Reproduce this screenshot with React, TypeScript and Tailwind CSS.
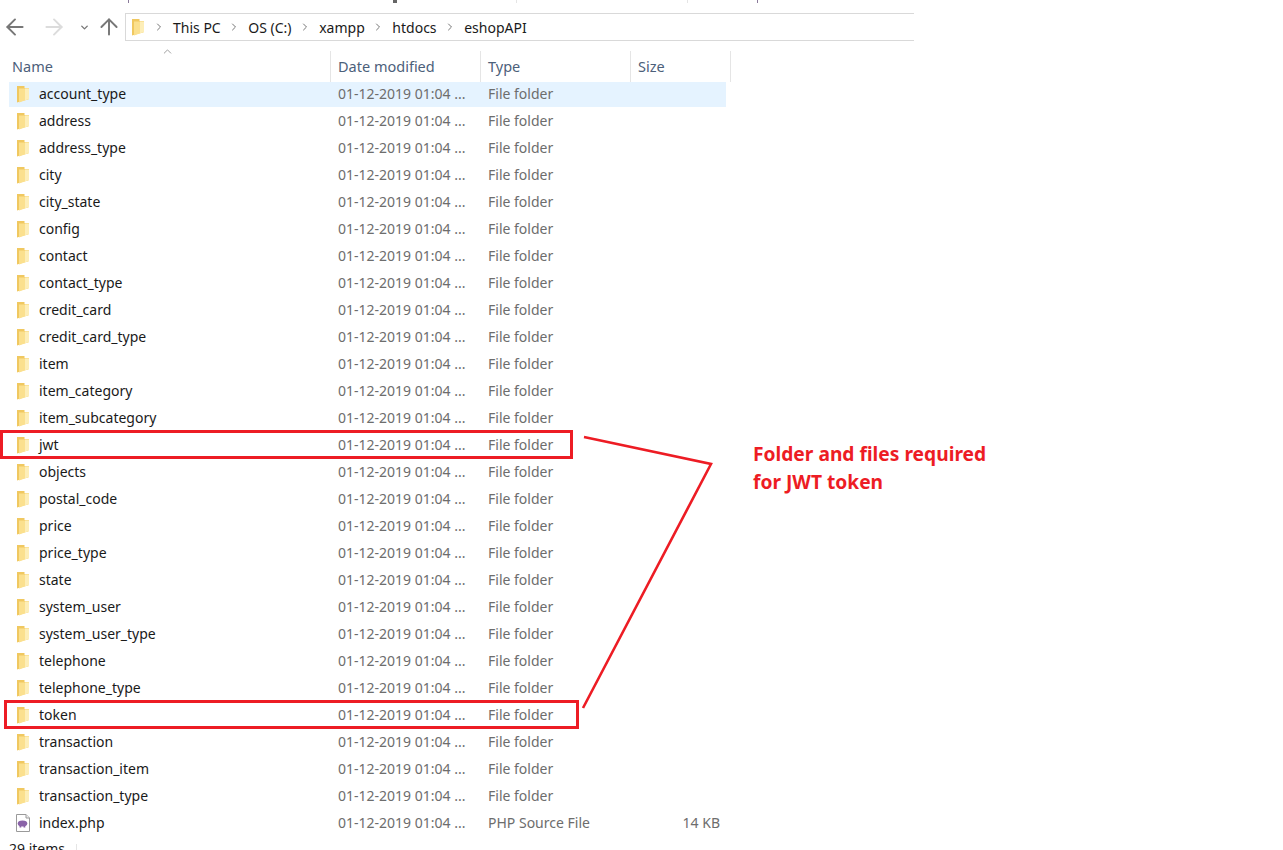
import { ArrowLeft, ArrowRight, ArrowUp, ChevronDown, ChevronRight, ChevronUp } from 'lucide-react';

const folders = [
  'account_type', 'address', 'address_type', 'city', 'city_state', 'config', 'contact', 'contact_type',
  'credit_card', 'credit_card_type', 'item', 'item_category', 'item_subcategory', 'jwt', 'objects',
  'postal_code', 'price', 'price_type', 'state', 'system_user', 'system_user_type', 'telephone',
  'telephone_type', 'token', 'transaction', 'transaction_item', 'transaction_type',
];

const crumbs = ['This PC', 'OS (C:)', 'xampp', 'htdocs', 'eshopAPI'];

function FolderIcon({ className = '' }: { className?: string }) {
  return (
    <svg width="14" height="18" viewBox="0 0 14 18" className={className}>
      <path d="M1 1 L8.5 1 L8.5 3 L13 3 L13 14 L1 17.5 Z" fill="#f0c860" />
      <path d="M3 3.5 L13 3.5 L13 14 L3 17.5 Z" fill="#fbe08e" />
      <path d="M9 3.5 L13 3.5 L13 14 L9 15.2 Z" fill="#fdeeb8" />
    </svg>
  );
}

function PhpIcon() {
  return (
    <svg width="14" height="18" viewBox="0 0 14 18">
      <path d="M0.5 0.5 H10 L13.5 4 V17.5 H0.5 Z" fill="#fff" stroke="#9a9a9a" />
      <path d="M10 0.5 V4 H13.5" fill="#eee" stroke="#9a9a9a" />
      <ellipse cx="6.5" cy="9.5" rx="4.8" ry="3" fill="#8a63a8" />
      <rect x="3.5" y="11" width="1.8" height="2.5" fill="#8a63a8" />
      <rect x="7.5" y="11" width="1.8" height="2.5" fill="#8a63a8" />
    </svg>
  );
}

function Row({ name, selected, icon, type = 'File folder', size = '' }: { name: string; selected?: boolean; icon?: React.ReactNode; type?: string; size?: string }) {
  return (
    <div className={`ml-[9px] w-[717px] h-[25px] mb-[2px] pb-[2px] flex items-center text-[14px] ${selected ? 'bg-[#e5f3ff]' : ''}`}>
      <div className="w-[321px] flex items-center">
        <div className="w-[30px] pl-[7px] pt-[1px] flex items-center">{icon ?? <FolderIcon />}</div>
        <span className="text-[#1a1a1a]">{name}</span>
      </div>
      <div className="w-[150px] pl-[8px] text-[#6d6d6d] whitespace-nowrap">01-12-2019 01:04 ...</div>
      <div className="w-[150px] pl-[8px] text-[#6d6d6d] whitespace-nowrap">{type}</div>
      <div className="w-[90px] text-right text-[#6d6d6d]">{size}</div>
    </div>
  );
}

export default function App() {
  return (
    <div className="relative w-[1283px] h-[850px] overflow-hidden bg-white font-['Noto_Sans','Open_Sans',sans-serif]">
      {/* Descenders left from the cropped row above */}
      <div className="absolute left-[128px] top-0 w-px h-[3px] bg-[#8a7a9a]" />
      <div className="absolute left-[393px] top-0 w-[4px] h-[3px] bg-[#666666]" />
      <div className="absolute left-[516px] top-0 w-px h-[3px] bg-[#e5e5e5]" />
      <div className="absolute left-[687px] top-0 w-px h-[3px] bg-[#e5e5e5]" />
      <div className="absolute left-[757px] top-0 w-px h-[3px] bg-[#8a7a9a]" />

      {/* Address bar */}
      <div className="h-[50px] pt-[13px] flex">
        <div className="w-[125px] h-[28px] flex items-center text-[#777777]">
          <ArrowLeft className="ml-[2px] w-[26px] h-[26px]" strokeWidth={1.8} />
          <ArrowRight className="ml-[13px] w-[26px] h-[26px] text-[#dcdcdc]" strokeWidth={1.8} />
          <ChevronDown className="ml-[12px] w-[11px] h-[11px]" strokeWidth={3} />
          <ArrowUp className="ml-[6px] w-[26px] h-[26px]" strokeWidth={1.8} />
        </div>
        <div className="w-[789px] h-[28px] border-t border-b border-l border-[#d9d9d9] flex items-center text-[14px] text-[#1a1a1a]">
          <FolderIcon className="ml-[5px] mr-[8px]" />
          {crumbs.map((crumb) => (
            <div key={crumb} className="flex items-center">
              <ChevronRight className="w-[12px] h-[12px] text-[#777777] mr-[8px]" strokeWidth={2} />
              <span className="mr-[7.6px]">{crumb}</span>
            </div>
          ))}
        </div>
      </div>

      {/* Column headers */}
      <div className="relative h-[32px] pt-[1px] flex items-center text-[14.5px] text-[#4c607a]">
        <ChevronUp className="absolute left-[161px] top-[-5px] w-[13px] h-[13px] text-[#8a8a8a]" strokeWidth={1.5} />
        <div className="w-[331px] h-full pl-[12px] flex items-center border-r border-[#e5e5e5]">Name</div>
        <div className="w-[150px] h-full pl-[7px] flex items-center border-r border-[#e5e5e5]">Date modified</div>
        <div className="w-[150px] h-full pl-[7px] flex items-center border-r border-[#e5e5e5]">Type</div>
        <div className="w-[100px] h-full pl-[7px] flex items-center border-r border-[#e5e5e5]">Size</div>
      </div>

      {/* File list */}
      <div>
        {folders.map((name, i) => (
          <Row key={name} name={name} selected={i === 0} />
        ))}
        <Row name="index.php" icon={<PhpIcon />} type="PHP Source File" size="14 KB" />
      </div>

      {/* Status bar, cut by the bottom of the window */}
      <div className="flex h-[12px]">
        <div className="w-[67px] ml-[9px] pt-[1px] text-[14px] leading-[20px] text-[#1a1a1a] whitespace-nowrap">29 items</div>
        <div className="mt-[6px] w-px h-[6px] bg-[#e5e5e5]" />
      </div>

      {/* Annotations */}
      <div className="absolute left-0 top-[430px] w-[573px] h-[29px] border-[3px] border-[#ed1c24]" />
      <div className="absolute left-[4px] top-[700px] w-[575px] h-[29px] border-[3px] border-[#ed1c24]" />
      <svg className="absolute left-0 top-0 pointer-events-none" width="1283" height="850">
        <path d="M584 437 L711 464 L583 708" fill="none" stroke="#ed1c24" strokeWidth="2.6" />
      </svg>
      <div className="absolute left-[753px] top-[440px] text-[19.2px] leading-[28px] font-bold text-[#ed1c24] whitespace-nowrap">
        Folder and files required<br />for JWT token
      </div>
    </div>
  );
}
